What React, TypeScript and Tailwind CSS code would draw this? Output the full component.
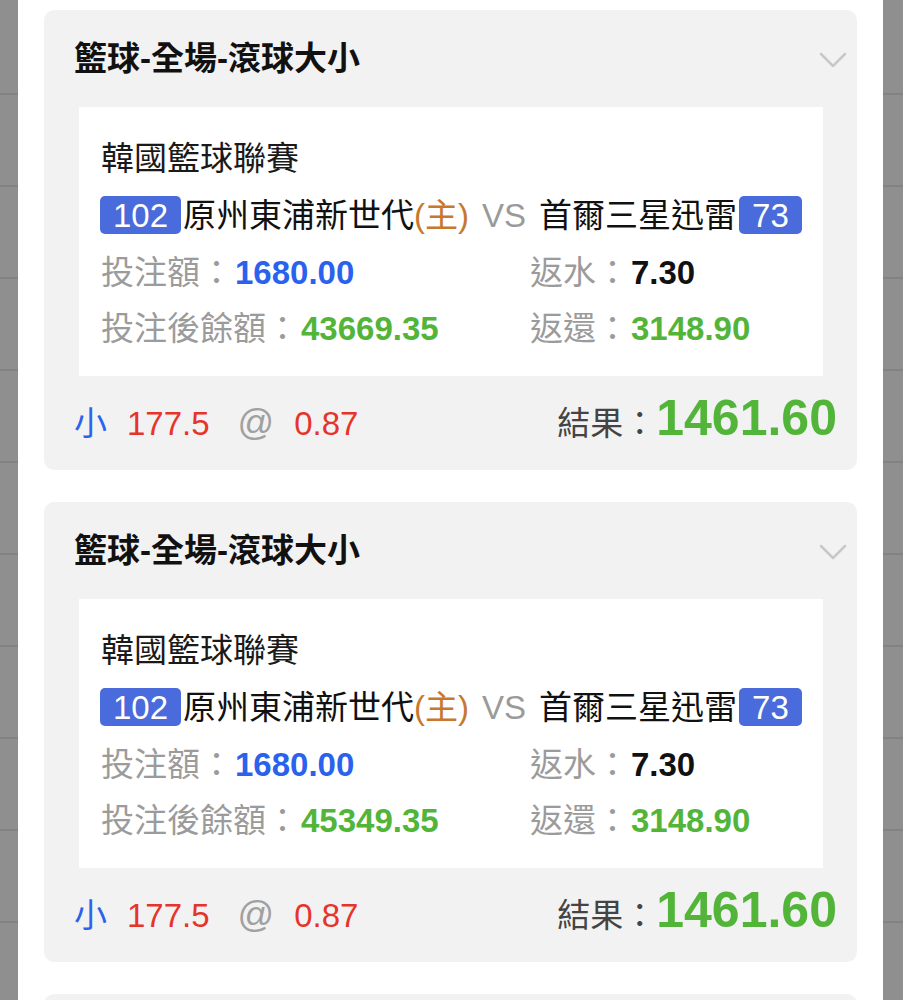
import React from "react";

const FONT = { fontFamily: '"Liberation Sans", "Noto Sans CJK TC", sans-serif' };

function Strip({ w }: { w: string }) {
  const blocks = [95, 92, 92, 92, 92, 92, 92, 92, 92, 92, 92];
  return (
    <div className={`${w} shrink-0 bg-[#8f8f8f] flex flex-col overflow-hidden`}>
      {blocks.map((h, i) => (
        <div
          key={i}
          className="shrink-0 border-b-[2px] border-[#828282]"
          style={{ height: h }}
        />
      ))}
    </div>
  );
}

function Badge({ children }: { children: React.ReactNode }) {
  return (
    <span className="inline-flex items-center h-[38px] px-[13px] rounded-[5px] bg-[#4a6bdb] text-white leading-none">
      {children}
    </span>
  );
}

function Card({ remain }: { remain: string }) {
  return (
    <div className="shrink-0 w-full rounded-[10px] bg-[#f2f2f2]">
      <div className="h-[97px] flex items-center justify-between pl-[30px] pr-[10px]">
        <div className="text-[33px] font-bold text-[#111] leading-none">籃球-全場-滾球大小</div>
        <svg width="28" height="17" viewBox="0 0 28 17" className="mt-[3px]">
          <polyline points="2,2 14,14 26,2" fill="none" stroke="#c8c8c8" strokeWidth="2.5" strokeLinecap="round" strokeLinejoin="round" />
        </svg>
      </div>
      <div className="ml-[35px] mr-[34px] bg-white pt-[23px] pb-[20px] pl-[22px] text-[33px] leading-none">
        <div className="h-[56px] flex items-center text-[#1a1a1a]">韓國籃球聯賽</div>
        <div className="h-[58px] flex items-center text-[#111]">
          <span className="-ml-[1px]"><Badge>102</Badge></span>
          <span className="ml-[2px]">原州東浦新世代</span>
          <span className="text-[#c8782e]">(主)</span>
          <span className="ml-[13px] mr-[13px] text-[#9a9a9a]">VS</span>
          <span>首爾三星迅雷</span>
          <span className="ml-[2px]"><Badge>73</Badge></span>
        </div>
        <div className="grid grid-cols-[429px_1fr]">
          <div className="h-[56px] flex items-center">
            <span className="text-[#9b9b9b]">投注額：</span>
            <span className="ml-[2px] font-bold text-[#2a62ee]">1680.00</span>
          </div>
          <div className="h-[56px] flex items-center">
            <span className="text-[#9b9b9b]">返水：</span>
            <span className="ml-[2px] font-bold text-[#111]">7.30</span>
          </div>
          <div className="h-[56px] flex items-center">
            <span className="text-[#9b9b9b]">投注後餘額：</span>
            <span className="ml-[2px] font-bold text-[#52b53a]">{remain}</span>
          </div>
          <div className="h-[56px] flex items-center">
            <span className="text-[#9b9b9b]">返還：</span>
            <span className="ml-[2px] font-bold text-[#52b53a]">3148.90</span>
          </div>
        </div>
      </div>
      <div className="h-[94px] pt-[17px] flex items-baseline justify-between pl-[30px] pr-[20px]">
        <div className="flex items-baseline text-[33px] leading-none">
          <span className="text-[#2a62ee]">小</span>
          <span className="ml-[20px] text-[#e5352b]">177.5</span>
          <span className="ml-[28px] text-[36px] text-[#a0a0a0]">@</span>
          <span className="ml-[20px] text-[#e5352b]">0.87</span>
        </div>
        <div className="flex items-baseline leading-none">
          <span className="text-[33px] text-[#444]">結果：</span>
          <span className="text-[50px] font-bold text-[#52b53a]">1461.60</span>
        </div>
      </div>
    </div>
  );
}

export default function App() {
  return (
    <div className="w-[903px] h-[1000px] flex overflow-hidden bg-white" style={FONT}>
      <Strip w="w-[18px]" />
      <div className="flex-1 min-w-0 bg-white px-[26px] pt-[10px] flex flex-col gap-[32px] overflow-hidden">
        <Card remain="43669.35" />
        <Card remain="45349.35" />
        <div className="shrink-0 w-full h-[97px] rounded-[10px] bg-[#f2f2f2]" />
      </div>
      <Strip w="w-[20px]" />
    </div>
  );
}
